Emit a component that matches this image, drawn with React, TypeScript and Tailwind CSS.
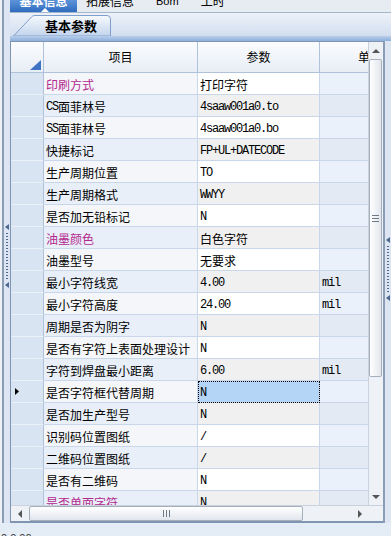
type Row = {
  name: string
  value: string
  unit?: string
  purple?: boolean
  selected?: boolean
}

const rows: Row[] = [
  { name: '印刷方式', value: '打印字符', purple: true },
  { name: 'CS面菲林号', value: '4saaw001a0.to' },
  { name: 'SS面菲林号', value: '4saaw001a0.bo' },
  { name: '快捷标记', value: 'FP+UL+DATECODE' },
  { name: '生产周期位置', value: 'TO' },
  { name: '生产周期格式', value: 'WWYY' },
  { name: '是否加无铅标记', value: 'N' },
  { name: '油墨颜色', value: '白色字符', purple: true },
  { name: '油墨型号', value: '无要求' },
  { name: '最小字符线宽', value: '4.00', unit: 'mil' },
  { name: '最小字符高度', value: '24.00', unit: 'mil' },
  { name: '周期是否为阴字', value: 'N' },
  { name: '是否有字符上表面处理设计', value: 'N' },
  { name: '字符到焊盘最小距离', value: '6.00', unit: 'mil' },
  { name: '是否字符框代替周期', value: 'N', selected: true },
  { name: '是否加生产型号', value: 'N' },
  { name: '识别码位置图纸', value: '/' },
  { name: '二维码位置图纸', value: '/' },
  { name: '是否有二维码', value: 'N' },
  { name: '是否单面字符', value: 'N', purple: true },
]

// latin runs use a half-width mono face, like the old SimSun grid
function Mixed({ text }: { text: string }) {
  const parts = text.match(/[\x00-\x7f]+|[^\x00-\x7f]+/g) ?? []
  return (
    <>
      {parts.map((p, i) =>
        /^[\x00-\x7f]/.test(p) ? (
          <span key={i} className="[font-family:'Liberation_Mono',monospace] text-[12px] tracking-[-1.2px]">
            {p}
          </span>
        ) : (
          <span key={i}>{p}</span>
        )
      )}
    </>
  )
}

function Grip() {
  return (
    <div className="flex flex-col items-center gap-[3px]">
      <svg width="4" height="6" viewBox="0 0 4 6">
        <polygon points="4,0 0,3 4,6" fill="#4b6890" />
      </svg>
      <div className="flex flex-col gap-[2px]">
        {Array.from({ length: 16 }).map((_, i) => (
          <div key={i} className="w-[2px] h-[1px] bg-[#4b6890]" />
        ))}
      </div>
      <svg width="4" height="6" viewBox="0 0 4 6">
        <polygon points="4,0 0,3 4,6" fill="#4b6890" />
      </svg>
    </div>
  )
}

function TopTabs() {
  return (
    <div className="h-[13px] flex items-start bg-[#e7ecf2] border-b border-[#a6b6ca] overflow-hidden">
      <div className="relative w-[67px] h-[12px] bg-gradient-to-b from-[#5d93d8] to-[#2f6bbf] flex justify-center">
        <span className="-mt-[5px] h-[12px] leading-[12px] text-white font-bold">基本信息</span>
        <svg className="absolute left-[31px] top-[8px]" width="8" height="4" viewBox="0 0 8 4">
          <polygon points="4,0 8,4 0,4" fill="#ffffff" />
        </svg>
      </div>
      <span className="ml-[9px] -mt-[5px] leading-[12px]">拓展信息</span>
      <span className="ml-[22px] -mt-[5px] leading-[12px] [font-family:'Liberation_Sans',sans-serif] text-[11px]">Bom</span>
      <span className="ml-[22px] -mt-[5px] leading-[12px]">工时</span>
    </div>
  )
}

function SubTabs() {
  return (
    <div className="h-[23px] bg-gradient-to-b from-[#edf2f9] to-[#d2deef] flex items-end">
      <div className="relative ml-[3px] w-[98px] h-[21px]">
        <svg className="absolute inset-0" width="98" height="21" viewBox="0 0 98 21">
          <defs>
            <linearGradient id="tabfill" x1="0" y1="0" x2="0" y2="1">
              <stop offset="0" stopColor="#f7fafd" />
              <stop offset="1" stopColor="#c2d4ec" />
            </linearGradient>
          </defs>
          <path
            d="M0.5,21 L18.5,2 Q19.5,0.5 22,0.5 L94,0.5 Q97.5,0.5 97.5,4 L97.5,21 Z"
            fill="url(#tabfill)"
            stroke="#7f9fcd"
          />
        </svg>
        <span className="relative block pl-[32px] leading-[21px] text-[13px] font-bold">基本参数</span>
      </div>
    </div>
  )
}

function VScroll() {
  return (
    <div className="w-[15px] flex flex-col bg-[#eef1f5] border-l border-[#c9d2dd]">
      <div className="h-[17px] flex items-center justify-center">
        <svg width="8" height="4" viewBox="0 0 8 4">
          <polygon points="4,0 8,4 0,4" fill="#555" />
        </svg>
      </div>
      <div className="h-[318px] mr-[1px] rounded-[2px] border border-[#a5afbc] bg-gradient-to-r from-white to-[#e1e6ed] flex flex-col items-center justify-center gap-[2px]">
        <div className="w-[7px] h-[1px] bg-[#6f7a88]" />
        <div className="w-[7px] h-[1px] bg-[#6f7a88]" />
        <div className="w-[7px] h-[1px] bg-[#6f7a88]" />
      </div>
      <div className="flex-1" />
      <div className="h-[17px] flex items-center justify-center">
        <svg width="8" height="4" viewBox="0 0 8 4">
          <polygon points="0,0 8,0 4,4" fill="#555" />
        </svg>
      </div>
    </div>
  )
}

function HScroll() {
  return (
    <div className="h-[16px] flex border-t border-[#c9d2dd] bg-[#eef1f5]">
      <div className="w-[17px] flex items-center justify-center">
        <svg width="4" height="8" viewBox="0 0 4 8">
          <polygon points="4,0 4,8 0,4" fill="#555" />
        </svg>
      </div>
      <div className="w-[274px] ml-[1px] rounded-[2px] border border-[#a5afbc] bg-gradient-to-b from-white to-[#e1e6ed] flex items-center justify-center gap-[2px]">
        <div className="w-[1px] h-[7px] bg-[#6f7a88]" />
        <div className="w-[1px] h-[7px] bg-[#6f7a88]" />
        <div className="w-[1px] h-[7px] bg-[#6f7a88]" />
      </div>
      <div className="flex-1" />
      <div className="w-[17px] flex items-center justify-center">
        <svg width="4" height="8" viewBox="0 0 4 8">
          <polygon points="0,0 4,4 0,8" fill="#555" />
        </svg>
      </div>
      <div className="w-[15px] bg-[#eef1f5]" />
    </div>
  )
}

function Table() {
  return (
    <div className="flex-1 min-w-0 overflow-hidden bg-white">
      <div className="w-[405px]">
        <div className="flex h-[31px] bg-gradient-to-b from-[#fbfcfe] to-[#e7edf5]">
          <div className="relative w-[33px] border-r border-b border-[#b0c2da]">
            <svg className="absolute right-[2px] bottom-[2px]" width="11" height="10" viewBox="0 0 11 10">
              <polygon points="11,0 11,10 0,10" fill="#3f74c4" />
            </svg>
          </div>
          <div className="w-[154px] border-r border-b border-[#b0c2da] flex items-center justify-center">项目</div>
          <div className="w-[122px] border-r border-b border-[#b0c2da] flex items-center justify-center">参数</div>
          <div className="w-[96px] border-b border-[#b0c2da] flex items-center justify-center pl-[4px]">单位</div>
        </div>
        {rows.map((r, i) => {
          const odd = i % 2 === 1
          return (
            <div key={i} className="flex h-[22px]">
              <div className="w-[33px] bg-[#d9e4f2] border-r border-[#b0c2da] border-b border-b-[#eaf0f8] flex items-center pl-[4px]">
                {r.selected && (
                  <svg width="4" height="7" viewBox="0 0 4 7">
                    <polygon points="0,0 4,3.5 0,7" fill="#000" />
                  </svg>
                )}
              </div>
              <div
                className={`w-[154px] border-r border-b border-[#c9d7ea] flex items-center pl-[2px] pt-[2px] whitespace-nowrap ${
                  odd ? 'bg-[#e9eff8]' : 'bg-[#f4f6f9]'
                } ${r.purple ? 'text-[#b3288f]' : 'text-black'}`}
              >
                <Mixed text={r.name} />
              </div>
              <div
                className={`w-[122px] border-r border-b border-[#c9d7ea] flex items-center pl-[2px] pt-[2px] whitespace-nowrap ${
                  r.selected
                    ? 'bg-[#b5d5f7] outline-1 outline-dotted outline-black -outline-offset-1'
                    : odd
                      ? 'bg-[#f0f0f0]'
                      : 'bg-white'
                }`}
              >
                <Mixed text={r.value} />
              </div>
              <div
                className={`w-[96px] border-b border-[#c9d7ea] flex items-center pl-[2px] pt-[2px] ${
                  odd ? 'bg-[#e3eaf3]' : 'bg-[#eaf1fb]'
                }`}
              >
                {r.unit && <Mixed text={r.unit} />}
              </div>
            </div>
          )
        })}
      </div>
    </div>
  )
}

export default function App() {
  return (
    <div className="w-[391px] h-[536px] overflow-hidden bg-[#e4ecf6] flex flex-col [font-family:'Noto_Sans_CJK_SC',sans-serif] text-[12px] text-black">
      <div className="flex h-[523px]">
        <div className="w-[10px] flex">
          <div className="w-[2px] bg-[#edf1f6]" />
          <div className="w-[2px] bg-[#8b9db5]" />
          <div className="flex-1 bg-[#dce5f1] flex flex-col pt-[224px]">
            <Grip />
          </div>
        </div>
        <div className="flex-1 min-w-0 flex flex-col">
          <TopTabs />
          <SubTabs />
          <div className="h-[5px] bg-gradient-to-b from-[#b9cfec] to-[#8eaedb]" />
          <div className="flex flex-1 min-h-0">
            <div className="w-[373px] flex flex-col border-l border-t border-b-2 border-[#7f95b2]">
              <div className="flex flex-1 min-h-0">
                <Table />
                <VScroll />
              </div>
              <HScroll />
            </div>
            <div className="flex-1 flex">
              <div className="w-[2px] bg-[#8b9db5]" />
              <div className="flex-1 bg-[#dce5f1] flex flex-col items-center pt-[196px]">
                <Grip />
              </div>
            </div>
          </div>
        </div>
      </div>
      <div className="flex-1 overflow-hidden pt-[9px] pl-[1px] [font-family:'Liberation_Sans',sans-serif] text-[11px] leading-[12px] text-[#333]">
        0.0.00
      </div>
    </div>
  )
}
